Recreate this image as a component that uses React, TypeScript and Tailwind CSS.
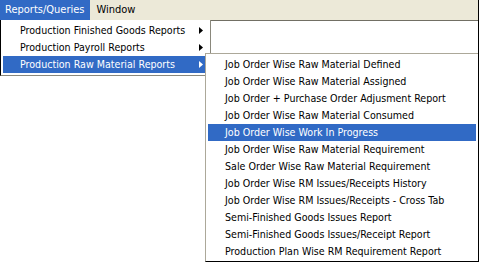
const mainItems = [
  { label: "Production Finished Goods Reports", active: false },
  { label: "Production Payroll Reports", active: false },
  { label: "Production Raw Material Reports", active: true },
];

const subItems = [
  "Job Order Wise Raw Material Defined",
  "Job Order Wise Raw Material Assigned",
  "Job Order + Purchase Order Adjusment Report",
  "Job Order Wise Raw Material Consumed",
  "Job Order Wise Work In Progress",
  "Job Order Wise Raw Material Requirement",
  "Sale Order Wise Raw Material Requirement",
  "Job Order Wise RM Issues/Receipts History",
  "Job Order Wise RM Issues/Receipts - Cross Tab",
  "Semi-Finished Goods Issues Report",
  "Semi-Finished Goods Issues/Receipt Report",
  "Production Plan Wise RM Requirement Report",
];

function Arrow({ white }: { white: boolean }) {
  return (
    <svg width="4" height="7" viewBox="0 0 4 7" className="shrink-0">
      <path d="M0 0 L4 3.5 L0 7 Z" fill={white ? "#ffffff" : "#000000"} />
    </svg>
  );
}

export default function App() {
  return (
    <div
      className="relative w-[479px] h-[262px] overflow-hidden bg-white border-r border-black text-[10.6px] text-black"
      style={{ fontFamily: '"DejaVu Sans Condensed", "DejaVu Sans", sans-serif' }}
    >
      <div className="flex h-[21px] items-stretch bg-[#ECE9D8] border-b border-[#716F64]">
        <div className="flex items-center bg-[#316AC5] pl-[5px] pr-[6px] text-white text-[11px]">Reports/Queries</div>
        <div className="flex items-center px-[6px] text-[11px]">Window</div>
      </div>

      {/* first dropdown */}
      <div className="absolute left-0 top-[20px] w-[211px] border-l border-black border-r border-r-[#8a887c] border-b border-b-[#8a887c] bg-white px-[2px] py-[2px]">
        {mainItems.map((it) => (
          <div
            key={it.label}
            className={`flex h-[17px] items-center pl-[17px] pr-[5px] ${it.active ? "bg-[#316AC5] text-white" : ""}`}
          >
            <span className="flex-1 whitespace-nowrap">{it.label}</span>
            <Arrow white={it.active} />
          </div>
        ))}
      </div>

      {/* submenu */}
      <div className="absolute left-[205px] top-[53px] right-0 bottom-0 border-l border-t border-[#ACA899] border-b border-b-black bg-white px-[2px] pt-[2px]">
        {subItems.map((label, i) => (
          <div
            key={label}
            className={`flex h-[17px] items-center pl-[17px] whitespace-nowrap ${i === 4 ? "bg-[#316AC5] text-white" : ""}`}
          >
            {label}
          </div>
        ))}
      </div>
    </div>
  );
}
